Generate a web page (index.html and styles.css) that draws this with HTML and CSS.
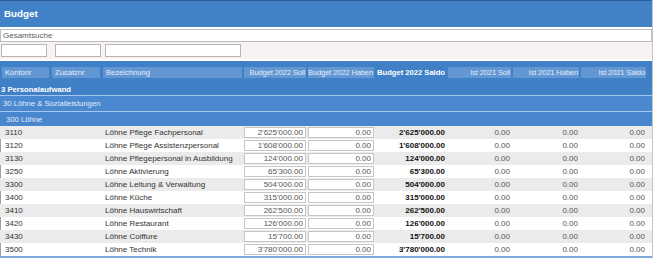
FILE: index.html
```html
<!DOCTYPE html>
<html lang="de">
<head>
    <meta charset="UTF-8">
    <meta name="viewport" content="width=device-width, initial-scale=1.0">
    <title>Budget</title>
    <link rel="stylesheet" href="styles.css">
</head>
<body>
    <div class="page">
        <div class="titlebar">Budget</div>

        <div class="search">
            <input type="text" class="search-input" placeholder="Gesamtsuche">
        </div>

        <div class="filters">
            <input type="text" class="filter filter-konto">
            <input type="text" class="filter filter-zusatz">
            <input type="text" class="filter filter-bez">
        </div>

        <div class="head">
            <div class="row head-row">
                <span class="hcell">Kontonr</span>
                <span class="hcell">Zusatznr</span>
                <span class="hcell">Bezeichnung</span>
                <span class="hcell num">Budget 2022 Soll</span>
                <span class="hcell num">Budget 2022 Haben</span>
                <span class="hcell num strong">Budget 2022 Saldo</span>
                <span class="hcell num">Ist 2021 Soll</span>
                <span class="hcell num">Ist 2021 Haben</span>
                <span class="hcell num">Ist 2021 Saldo</span>
            </div>
            <div class="group group-1">3 Personalaufwand</div>
            <div class="group group-2">30 Löhne &amp; Sozialleistungen</div>
            <div class="group group-3">300 Löhne</div>
        </div>

        <div class="rows" id="rows"></div>
    </div>

    <script>
        const lines = [
            ['3110', 'Löhne Pflege Fachpersonal', "2'625'000.00"],
            ['3120', 'Löhne Pflege Assistenzpersonal', "1'608'000.00"],
            ['3130', 'Löhne Pflegepersonal in Ausbildung', "124'000.00"],
            ['3250', 'Löhne Aktivierung', "65'300.00"],
            ['3300', 'Löhne Leitung & Verwaltung', "504'000.00"],
            ['3400', 'Löhne Küche', "315'000.00"],
            ['3410', 'Löhne Hauswirtschaft', "262'500.00"],
            ['3420', 'Löhne Restaurant', "126'000.00"],
            ['3430', 'Löhne Coiffure', "15'700.00"],
            ['3500', 'Löhne Technik', "3'780'000.00"]
        ];

        const rowsEl = document.getElementById('rows');

        for (const [konto, bez, soll] of lines) {
            const row = document.createElement('div');
            row.className = 'row data-row';
            row.innerHTML = `
                <span class="cell">${konto}</span>
                <span class="cell"></span>
                <span class="cell">${bez.replace('&', '&amp;')}</span>
                <input type="text" class="amount" value="${soll}">
                <input type="text" class="amount" value="0.00">
                <span class="cell num saldo">${soll}</span>
                <span class="cell num muted">0.00</span>
                <span class="cell num muted">0.00</span>
                <span class="cell num muted">0.00</span>`;
            rowsEl.appendChild(row);
        }
    </script>
</body>
</html>
```

FILE: styles.css
```css
body {
    margin: 0;
    font-family: "Liberation Sans", Arial, sans-serif;
    font-size: 8px;
    color: #333;
    background: #fff;
}

.page {
    width: 653px;
    border-right: 1px solid #c4c4c4;
    box-sizing: border-box;
}

.titlebar {
    height: 26px;
    line-height: 26px;
    padding-left: 4px;
    background: #4181c6;
    border-top: 1px solid #2d6099;
    color: #fff;
    font-weight: bold;
    font-size: 9.8px;
}

.search {
    padding-top: 2px;
}

.search-input {
    display: block;
    width: 100%;
    height: 13px;
    box-sizing: border-box;
    margin: 0;
    padding: 0 2px;
    border: 1px solid #bdbdbd;
    font: inherit;
    color: #555;
}

.search-input::placeholder {
    color: #5a5a5a;
}

.filters {
    display: flex;
    height: 17px;
    padding: 2px 0 0 1px;
    box-sizing: border-box;
    background: #f7f3f3;
    margin-bottom: 2px;
}

.filter {
    height: 13px;
    box-sizing: border-box;
    margin: 0;
    padding: 0 2px;
    border: 1px solid #b9b3b3;
    background: #fff;
    font: inherit;
}

.filter-konto {
    width: 46px;
    margin-right: 8px;
}

.filter-zusatz {
    width: 46px;
    margin-right: 4px;
}

.filter-bez {
    width: 136px;
}

.row {
    display: grid;
    grid-template-columns: 50px 52px 141px 64px 68px 72px 65px 68px 67px;
}

.head {
    background: #4080c6;
    color: #e2ebf8;
}

.head-row {
    height: 23px;
    padding-top: 6px;
    box-sizing: border-box;
    font-size: 7.6px;
}

.hcell {
    height: 11px;
    line-height: 11px;
    margin: 0 1px;
    padding: 0 3px;
    background: #6397d4;
    white-space: nowrap;
    overflow: hidden;
}

.hcell:first-child {
    margin-left: 2px;
}

.hcell:nth-child(2) {
    margin-left: 2px;
    margin-right: 2px;
}

.hcell.num {
    text-align: right;
    padding: 0 1px 0 0;
    letter-spacing: -0.15px;
}

.hcell.strong {
    background: none;
    color: #fff;
    font-weight: bold;
    letter-spacing: 0;
    overflow: visible;
}

.group {
    padding-left: 3px;
    box-sizing: border-box;
    border-bottom: 1px solid #a3c7ef;
    font-size: 7.7px;
}

.group-1 {
    height: 12px;
    line-height: 11px;
    padding-left: 1px;
    color: #fff;
    font-weight: bold;
}

.group-2 {
    height: 16px;
    line-height: 15px;
    background: #4a89cf;
}

.group-3 {
    height: 14px;
    line-height: 15px;
    padding-left: 6px;
    background: #4886cd;
    border-bottom: none;
}

.rows {
    border-left: 1px solid #a0a0a0;
    border-bottom: 2px solid #7fa9da;
}

.data-row {
    height: 13px;
    line-height: 13px;
    margin-left: -1px;
}

.data-row:nth-child(odd) {
    background: #ebebeb;
}

.cell {
    padding-left: 5px;
    white-space: nowrap;
}

.cell:nth-child(3) {
    padding-left: 3px;
}

.cell.num {
    text-align: right;
    padding: 0 2px 0 0;
}

.saldo {
    font-weight: bold;
    color: #111;
}

.muted {
    color: #555;
}

.amount {
    height: 11px;
    margin: 1px 1px 0;
    box-sizing: border-box;
    padding: 0 2px;
    border: 1px solid #c6c6c6;
    background: #fff;
    font: inherit;
    color: #555;
    text-align: right;
    min-width: 0;
}
```
